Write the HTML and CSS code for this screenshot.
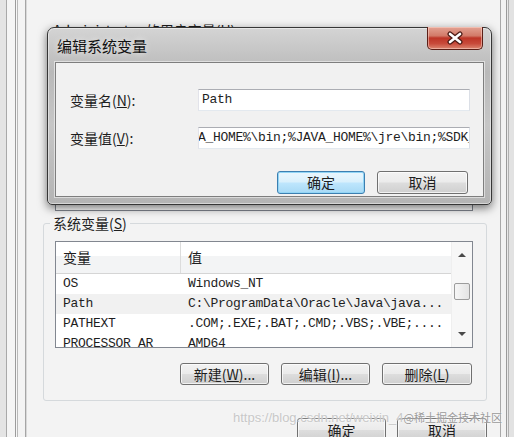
FILE: index.html
```html
<!DOCTYPE html>
<html lang="zh-CN">
<head>
  <meta charset="UTF-8">
  <title>编辑系统变量</title>
  <link rel="stylesheet" href="styles.css">
</head>
<body>
  <div class="screen">
    <div class="edge-left"></div>

    <div class="env-window">
      <div class="user-vars">Administrator 的用户变量(<u>U</u>)</div>
      <div class="user-list"></div>

      <fieldset class="sys-vars">
        <legend>系统变量(<u>S</u>)</legend>
        <div class="listview">
          <div class="list-body">
            <div class="list-head">
              <span class="col-name">变量</span>
              <span class="col-value">值</span>
            </div>
            <div class="row"><span class="col-name">OS</span><span class="col-value">Windows_NT</span></div>
            <div class="row hover"><span class="col-name">Path</span><span class="col-value">C:\ProgramData\Oracle\Java\java...</span></div>
            <div class="row"><span class="col-name">PATHEXT</span><span class="col-value">.COM;.EXE;.BAT;.CMD;.VBS;.VBE;....</span></div>
            <div class="row"><span class="col-name">PROCESSOR_AR</span><span class="col-value">AMD64</span></div>
          </div>
          <div class="scrollbar">
            <span class="arrow up"></span>
            <span class="thumb"></span>
            <span class="arrow down"></span>
          </div>
        </div>
        <div class="group-buttons">
          <button class="btn">新建(<u>W</u>)...</button>
          <button class="btn">编辑(<u>I</u>)...</button>
          <button class="btn wide">删除(<u>L</u>)</button>
        </div>
      </fieldset>

      <div class="window-buttons">
        <button class="btn">确定</button>
        <button class="btn wide">取消</button>
      </div>
    </div>

    <div class="edge-right"></div>

    <div class="dialog">
      <div class="titlebar">
        <span class="title">编辑系统变量</span>
        <span class="close">
          <svg width="20" height="14" viewBox="0 0 20 14">
            <path d="M5 3 L15 11 M15 3 L5 11" stroke="#4a1a14" stroke-width="5" stroke-linecap="round"/>
            <path d="M5 3 L15 11 M15 3 L5 11" stroke="#fff" stroke-width="2.6" stroke-linecap="round"/>
          </svg>
        </span>
      </div>
      <div class="client">
        <label class="field-label">变量名(<u>N</u>):</label>
        <div class="field">Path</div>
        <label class="field-label">变量值(<u>V</u>):</label>
        <div class="field"><span class="scrolled">A_HOME%\bin;%JAVA_HOME%\jre\bin;%SDK_HOME%</span></div>
        <div class="dialog-buttons">
          <button class="btn default">确定</button>
          <button class="btn wide">取消</button>
        </div>
      </div>
    </div>

    <div class="watermark">https://blog.csdn.net/weixin_4<span class="wm-cjk">@稀土掘金技术社区</span></div>
  </div>
</body>
</html>
```

FILE: styles.css
```css
body {
  margin: 0;
  background-color: #ececec;
  font-family: "Noto Sans CJK SC", "Liberation Sans", sans-serif;
  color: #1e1e1e;
}

u {
  text-decoration: underline;
}

.screen {
  position: relative;
  display: flex;
  width: 514px;
  height: 437px;
  overflow: hidden;
}

/* window frames peeking out behind */
.edge-left {
  width: 27px;
  flex-shrink: 0;
  background: linear-gradient(to right,
    #e4e4e4 0, #e4e4e4 6px, #a9a9a9 6px, #a9a9a9 7px,
    #f5f5f5 7px, #f5f5f5 15px, #9c9c9c 15px, #9c9c9c 16px,
    #f7f7f7 16px, #f7f7f7 17px, #b9b9b9 17px, #b9b9b9 18px,
    #f3f3f3 18px, #f3f3f3 25px, #a5a5a5 25px, #a5a5a5 26px,
    #d8d8d8 26px);
}

.edge-right {
  width: 14px;
  flex-shrink: 0;
  background: linear-gradient(to right,
    #a8a8a8 0, #a8a8a8 1px, #f2f2f2 1px, #f2f2f2 6px,
    #9a9a9a 6px, #9a9a9a 7px, #e8e8e8 7px, #e8e8e8 8px,
    #b0b0b0 8px, #b0b0b0 9px, #e2e2e2 9px);
}

.env-window {
  width: 473px;
  flex-shrink: 0;
  padding-top: 22px;
  background-color: #f3f3f3;
}

.user-vars {
  padding-left: 26px;
  font-size: 14px;
  line-height: 16px;
}

.user-list {
  height: 168px;
  margin: 3px 27px 3px 28px;
  border: 1px solid #828790;
  background-color: #fff;
}

.sys-vars {
  margin: 0 13px 0 16px;
  padding: 9px 13px 15px 11px;
  border: 1px solid #d5d9dc;
  border-radius: 3px;
}

.sys-vars legend {
  margin-left: -5px;
  padding: 0 3px;
  font-size: 14px;
  line-height: 18px;
}

.listview {
  display: flex;
  height: 107px;
  box-sizing: border-box;
  border: 1px solid #828790;
  background-color: #fff;
}

.list-body {
  flex: 1;
  overflow: hidden;
}

.list-head {
  display: flex;
  height: 32px;
  box-sizing: border-box;
  border-bottom: 1px solid #d5d5d5;
  background: linear-gradient(#ffffff 45%, #f3f4f5 45%);
  font-size: 14px;
  line-height: 31px;
}

.list-head .col-name {
  border-right: 1px solid #dcdcdc;
}

.col-name {
  width: 125px;
  flex-shrink: 0;
  padding-left: 7px;
  box-sizing: border-box;
}

.col-value {
  padding-left: 7px;
  white-space: nowrap;
}

.row {
  display: flex;
  height: 20px;
  font-family: "Liberation Mono", monospace;
  font-size: 13px;
  letter-spacing: -0.3px;
  line-height: 20px;
}

.row.hover {
  background-color: #f1f1f1;
}

.scrollbar {
  display: flex;
  flex-direction: column;
  align-items: center;
  width: 20px;
  background-color: #f7f7f7;
  border-left: 1px solid #efefef;
}

.arrow {
  display: flex;
  width: 0;
  height: 0;
  border-left: 4px solid transparent;
  border-right: 4px solid transparent;
}

.arrow.up {
  margin-top: 11px;
  border-bottom: 4px solid #4a4a4a;
}

.arrow.down {
  margin-top: auto;
  margin-bottom: 11px;
  border-top: 4px solid #4a4a4a;
}

.thumb {
  width: 16px;
  height: 17px;
  margin-top: 26px;
  box-sizing: border-box;
  border: 1px solid #9c9c9c;
  border-radius: 2px;
  background: linear-gradient(to right, #f6f6f6, #e4e4e4);
}

.group-buttons {
  display: flex;
  justify-content: flex-end;
  gap: 12px;
  margin-top: 15px;
  margin-right: 1px;
}

.window-buttons {
  display: flex;
  justify-content: flex-end;
  gap: 11px;
  margin-top: 17px;
  padding-right: 13px;
}

.btn {
  width: 89px;
  height: 22px;
  padding: 0;
  border: 1px solid #707070;
  border-radius: 3px;
  background: linear-gradient(#f2f2f2 0, #ebebeb 48%, #dddddd 52%, #cfcfcf 100%);
  box-shadow: inset 0 0 0 1px rgba(255, 255, 255, 0.7);
  font-family: "Noto Sans CJK SC", sans-serif;
  font-size: 14px;
  line-height: 18px;
  color: #1e1e1e;
}

.btn.wide {
  width: 90px;
}

.window-buttons .btn {
  height: 24px;
}

.btn.default {
  border-color: #3c7fb1;
  background: linear-gradient(#eaf6fd 0, #d9f0fc 48%, #bee6fd 52%, #a7d9f5 100%);
  box-shadow: inset 0 0 0 1px #92d5f5;
}

/* edit dialog floating over the window */
.dialog {
  position: absolute;
  left: 47px;
  top: 27px;
  width: 445px;
  height: 178px;
  box-sizing: border-box;
  padding: 0 7px 7px;
  border: 1px solid #363636;
  border-radius: 7px 7px 5px 5px;
  background: linear-gradient(#d4d4d4 0, #b9b9b9 25%, #c6c6c6 55%, #b4b4b4 100%);
  box-shadow: 0 3px 10px rgba(0, 0, 0, 0.55), inset 0 0 0 1px rgba(255, 255, 255, 0.45);
}

.titlebar {
  display: flex;
  justify-content: space-between;
  align-items: flex-start;
  height: 34px;
}

.title {
  padding: 9px 0 0 2px;
  font-size: 15px;
  line-height: 17px;
  color: #111;
  text-shadow: 0 0 6px rgba(255, 255, 255, 0.8);
}

.close {
  display: flex;
  justify-content: center;
  align-items: center;
  width: 56px;
  height: 23px;
  margin: -1px 1px 0 0;
  box-sizing: border-box;
  border: 1px solid #5b1f17;
  border-top: none;
  border-radius: 0 0 5px 5px;
  background: linear-gradient(#e3a293 0, #d27a68 40%, #bd3527 50%, #c84a3a 75%, #dc8670 100%);
  box-shadow: inset 0 0 0 1px rgba(255, 220, 210, 0.5);
}

.client {
  display: grid;
  grid-template-columns: 128px 272px;
  row-gap: 11px;
  align-items: center;
  height: 135px;
  box-sizing: border-box;
  padding: 24px 13px 0 14px;
  border: 1px solid #7e7e7e;
  background-color: #f1f1f1;
  box-shadow: 0 0 0 1px rgba(255, 255, 255, 0.5);
}

.field-label {
  font-size: 14px;
  line-height: 18px;
}

.field {
  height: 22px;
  box-sizing: border-box;
  overflow: hidden;
  padding-left: 3px;
  border: 1px solid;
  border-color: #abadb3 #dbdfe6 #e3e9ef #e2e3ea;
  background-color: #fff;
  font-family: "Liberation Mono", monospace;
  font-size: 13px;
  letter-spacing: -0.3px;
  line-height: 20px;
  white-space: nowrap;
}

.scrolled {
  margin-left: -4px;
}

.dialog-buttons {
  grid-column: span 2;
  display: flex;
  justify-content: flex-end;
  gap: 12px;
  margin: 6px 2px 0 0;
}

.dialog-buttons .btn {
  height: 23px;
}

.dialog-buttons .btn.default {
  width: 88px;
}

.dialog-buttons .btn.wide {
  width: 91px;
}

.watermark {
  position: absolute;
  left: 233px;
  top: 409px;
  font-family: "Liberation Sans", sans-serif;
  font-size: 13px;
  line-height: 16px;
  color: #c8c8c8;
  text-shadow: 0 0 2px #fff;
}

.wm-cjk {
  font-family: "Noto Sans CJK SC", sans-serif;
  font-size: 11px;
  color: #9a9a9a;
}
```
